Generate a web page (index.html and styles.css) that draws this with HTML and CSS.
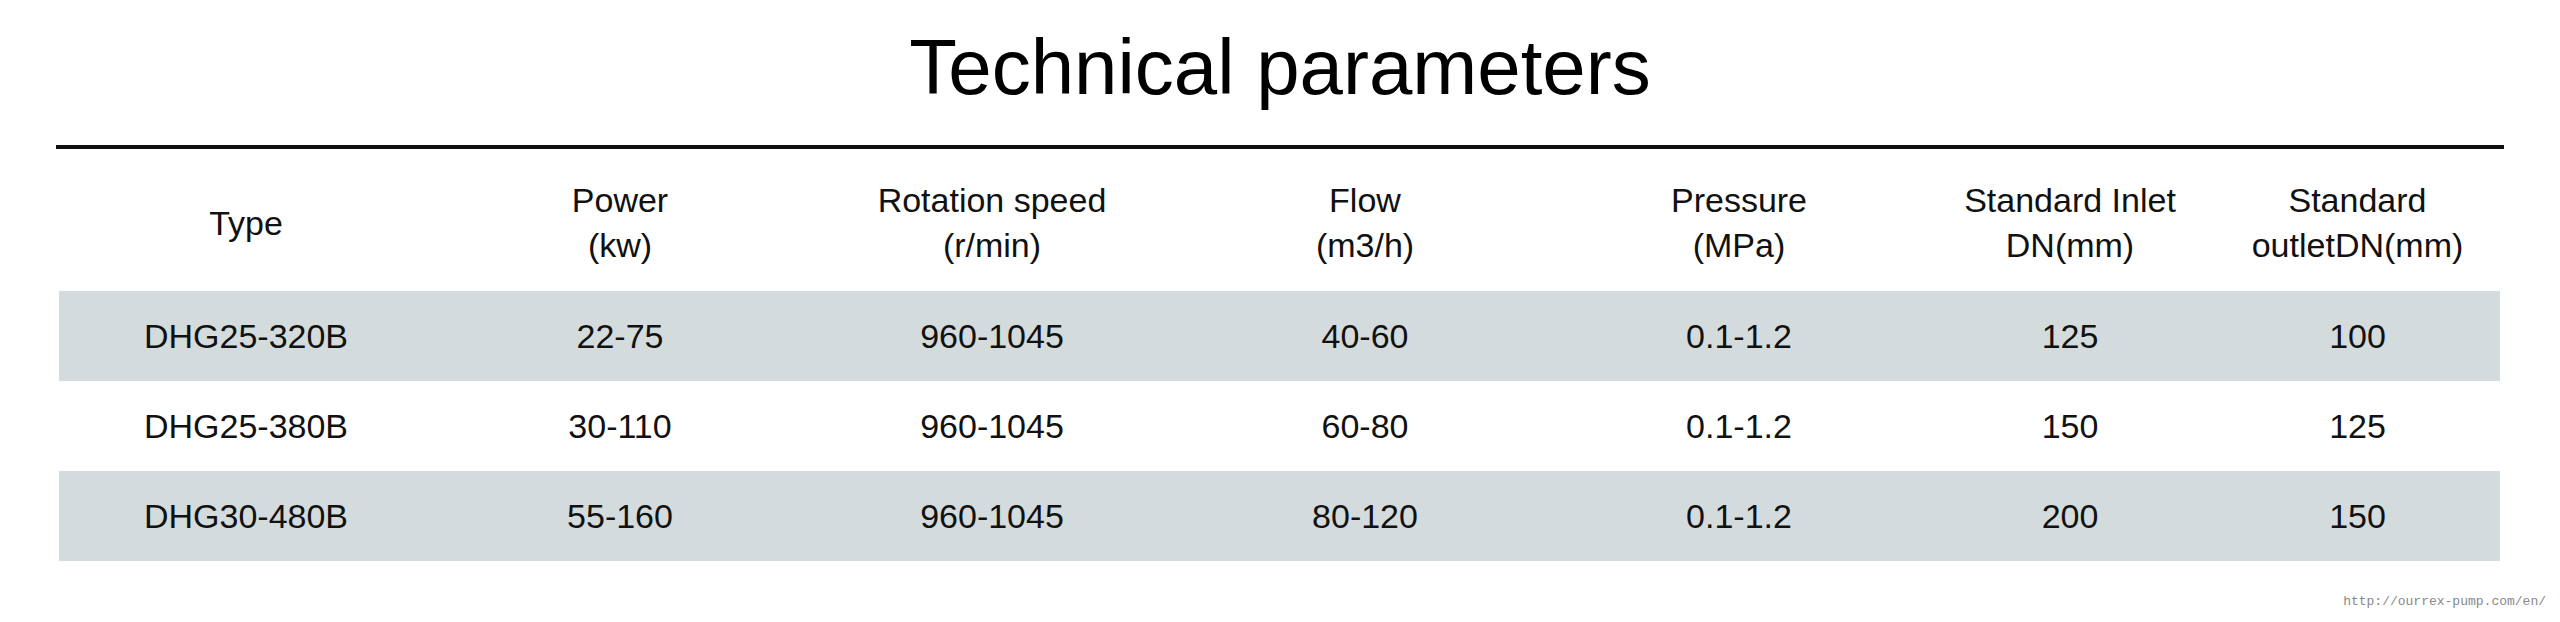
FILE: index.html
```html
<!DOCTYPE html>
<html lang="en">
<head>
  <meta charset="UTF-8">
  <title>Technical parameters</title>
  <link rel="stylesheet" href="styles.css">
</head>
<body>

  <div class="page">
    <h1 class="title">Technical parameters</h1>
    <div class="rule"></div>

    <div class="params">
      <div class="row head">
        <div class="cell">Type</div>
        <div class="cell">Power<br>(kw)</div>
        <div class="cell">Rotation speed<br>(r/min)</div>
        <div class="cell">Flow<br>(m3/h)</div>
        <div class="cell">Pressure<br>(MPa)</div>
        <div class="cell">Standard Inlet<br>DN(mm)</div>
        <div class="cell">Standard<br>outletDN(mm)</div>
      </div>

      <div class="row shaded">
        <div class="cell">DHG25-320B</div>
        <div class="cell">22-75</div>
        <div class="cell">960-1045</div>
        <div class="cell">40-60</div>
        <div class="cell">0.1-1.2</div>
        <div class="cell">125</div>
        <div class="cell">100</div>
      </div>

      <div class="row">
        <div class="cell">DHG25-380B</div>
        <div class="cell">30-110</div>
        <div class="cell">960-1045</div>
        <div class="cell">60-80</div>
        <div class="cell">0.1-1.2</div>
        <div class="cell">150</div>
        <div class="cell">125</div>
      </div>

      <div class="row shaded">
        <div class="cell">DHG30-480B</div>
        <div class="cell">55-160</div>
        <div class="cell">960-1045</div>
        <div class="cell">80-120</div>
        <div class="cell">0.1-1.2</div>
        <div class="cell">200</div>
        <div class="cell">150</div>
      </div>
    </div>

    <div class="source">http://ourrex-pump.com/en/</div>
  </div>

</body>
</html>
```

FILE: styles.css
```css
body {
  margin: 0;
  padding: 0;
  background: #fff;
  color: #111;
  font-family: 'Liberation Sans', Arial, sans-serif;
}

.page {
  width: 2560px;
  height: 622px;
  overflow: hidden;
}

.title {
  margin: 0;
  padding-top: 28px;
  font-size: 78px;
  font-weight: normal;
  line-height: 78px;
  text-align: center;
  color: #000;
}

.rule {
  height: 4px;
  margin: 39px 56px 0 56px;
  background: #111;
}

.params {
  margin: 0 60px 0 59px;
}

.row {
  display: grid;
  grid-template-columns: 374px 374px 370px 376px 372px 290px 1fr;
  align-items: center;
  height: 90px;
  font-size: 34px;
  text-align: center;
}

.row.head {
  height: 136px;
  padding-top: 6px;
  line-height: 45px;
}

.row.shaded {
  background: #d4dbdc;
}

.source {
  margin: 33px 14px 0 0;
  text-align: right;
  font-family: 'Liberation Mono', 'Courier New', monospace;
  font-size: 13px;
  color: #888;
}
```
